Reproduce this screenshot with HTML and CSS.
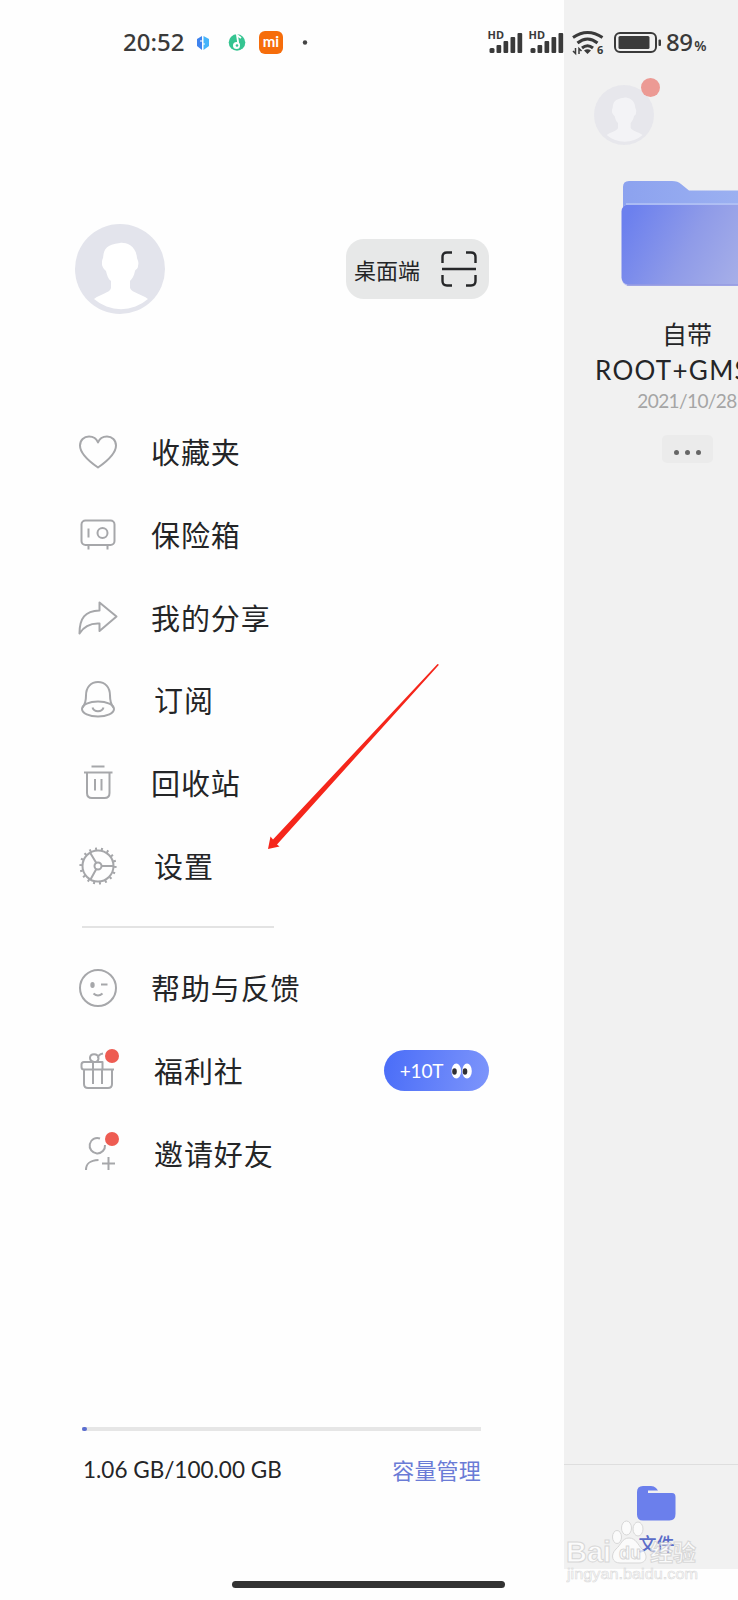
FILE: index.html
```html
<!DOCTYPE html>
<html lang="zh-CN">
<head>
  <meta charset="UTF-8" />
  <title>我的</title>
  <link rel="stylesheet" href="styles.css">
</head>
<body>

<!-- 状态栏 -->
<div class="status-bar">
  <span class="time">20:52</span>
  <svg class="status-left" width="120" height="30" viewBox="190 27 120 30">
    <path d="M202 36l-5 3v7l5 4z" fill="#3f83ee" />
    <path d="M203.500 36l5.500 3v7l-5.500 4z" fill="#45b4fa" />
    <path d="M200 41h3M205 44h-3" stroke="#fff" stroke-width="1" />
    <circle cx="237" cy="42.500" r="8.300" fill="#35c491" />
    <circle cx="236.500" cy="45.500" r="3.500" fill="#fff" />
    <path d="M238.500 45l-1.500-10 4 3" fill="none" stroke="#fff" stroke-width="1.800" />
    <circle cx="237" cy="45.500" r="1.300" fill="#35c491" />
    <rect x="259" y="31" width="24" height="23" rx="6" fill="#f66d0b" />
    <text class="mi" x="271" y="47" text-anchor="middle">mi</text>
    <circle cx="305" cy="42.500" r="2.200" fill="#444" />
  </svg>
  <svg class="status-right" width="176" height="30" viewBox="486 27 176 30">
    <g id="signal" fill="#3a3a3a">
      <text class="hd" x="487.500" y="39">HD</text>
      <rect x="489.500" y="48" width="5" height="5" rx="1.500" />
      <rect x="496.500" y="45" width="4.700" height="8" rx="1" />
      <rect x="503.500" y="41" width="4.700" height="12" rx="1" />
      <rect x="510.500" y="37" width="4.700" height="16" rx="1" />
      <rect x="517.500" y="33" width="4.700" height="20" rx="1" />
    </g>
    <use href="#signal" x="41" />
    <g fill="none" stroke="#3a3a3a" stroke-width="3">
      <path d="M573 37.500q14.500-10 29.500 0" />
      <path d="M577.500 43q10-8 20 0" />
      <path d="M582 48q5.500-4.500 11 0" />
      <path d="M575.500 48v5.500l-2.500-2.500M579 54v-5.500l2.500 2.500" stroke-width="1.500" />
    </g>
    <path d="M584 50.500q3.500-2.500 7 0l-3.500 3.500z" fill="#3a3a3a" />
    <text class="wifi-six" x="597" y="54">6</text>
    <rect x="615" y="33" width="41" height="19" rx="5" fill="none" stroke="#3a3a3a" stroke-width="2" />
    <rect x="618.500" y="36" width="31" height="13" rx="1.500" fill="#3a3a3a" />
    <rect x="658.500" y="39.500" width="2.500" height="6.500" rx="1" fill="#3a3a3a" />
  </svg>
  <span class="battery-text">89<small>%</small></span>
</div>

<!-- 侧边抽屉 -->
<div class="drawer">
  <div class="profile">
    <svg class="avatar" viewBox="0 0 90 90">
      <circle cx="45" cy="45" r="45" fill="#e3e4ec" />
      <path id="person" d="M45 19c2-1 16 0 17 15 1 3 2 4 1 8 0 3-2 3-3 5-1 5-3 8-5 10v7c2 5 12 6 18 11a41 41 0 0 1-54 0c6-5 16-6 17-11v-7c-3-2-4-6-5-10-2-2-3-3-4-6 0-4 0-5 1-7 1-8 2-13 17-15z" fill="#fff" />
    </svg>
    <div class="desktop-btn">
      <span>桌面端</span>
      <svg width="36" height="36" viewBox="0 0 36 36" fill="none" stroke="#262729" stroke-width="2.400">
        <path d="M1.500 12V6q0-4.500 4.500-4.500h5M25 1.500h5q4.500 0 4.500 4.500v6M34.500 24v6q0 4.500-4.500 4.500h-5M11 34.500H6q-4.500 0-4.500-4.500v-6M1 18h34" />
      </svg>
    </div>
  </div>

  <ul class="menu">
    <li>
      <svg class="icon" viewBox="0 0 40 40"><path d="M20 35.500C12 30 2 22 2 13.500 2 8 6 4.500 11 4.500c4 0 7.500 2 9 6 1.500-4 5-6 9-6 5 0 9 3.500 9 9C38 22 28 30 20 35.500z" /></svg>
      <span>收藏夹</span>
    </li>
    <li>
      <svg class="icon" viewBox="0 0 40 40"><rect x="3.500" y="5.500" width="33" height="24.500" rx="4" /><path d="M10.500 13.500v9M10.500 30v4.500M29.500 30v4.500" /><circle cx="24.500" cy="18" r="5" /></svg>
      <span>保险箱</span>
    </li>
    <li>
      <svg class="icon" viewBox="0 0 40 40"><path d="M1.500 35.500C1.500 20 7 13 21.500 12.500V4.500L38.500 18.500 21.500 33V25.500C12 25 6 28 1.500 35.500z" /></svg>
      <span>我的分享</span>
    </li>
    <li class="narrow">
      <svg class="icon" viewBox="0 0 40 40"><path d="M4.500 27.500C7.500 24 8 20 8 15.500 8 7 13 2 20 2s12 5 12 13.500c0 4.500.5 8.500 3.500 12" /><ellipse cx="20" cy="29" rx="16" ry="7.500" /><path d="M14.500 27.500c1.500 5 9.500 5 11 0" /></svg>
      <span>订阅</span>
    </li>
    <li>
      <svg class="icon" viewBox="0 0 40 40"><path d="M13.500 3.500h13M6 9.500h28.500M9 9.500V30q0 5 5 5h12.500q5 0 5-5V9.500M17 16v11.500M23.500 16v11.500" /></svg>
      <span>回收站</span>
    </li>
    <li class="narrow">
      <svg class="icon" viewBox="0 0 40 40"><circle cx="20" cy="20" r="15.500" /><circle cx="20" cy="20" r="17.300" stroke-width="2.600" pathLength="54" stroke-dasharray="1 2" /><circle cx="20" cy="20" r="3.500" /><path d="M23.500 20h12M18.300 17L12 6.500M18.300 23L12.500 33.500" /></svg>
      <span>设置</span>
    </li>
  </ul>

  <div class="divider"></div>

  <ul class="menu">
    <li>
      <svg class="icon" viewBox="0 0 40 40"><circle cx="20" cy="20" r="18" /><ellipse cx="14.500" cy="17" rx="1.200" ry="2" fill="#a6a7aa" /><path d="M23 16.500h6.500M15.500 25.500q4.500 4 9 0" /></svg>
      <span>帮助与反馈</span>
    </li>
    <li class="narrow">
      <svg class="icon" viewBox="0 0 40 40"><path d="M36 18.500H6q-2.500 0-2.500-2.500v-2.500Q3.500 11 6 11h18.500v7.500M6 18.500V33q0 4 4 4h20q4 0 4-4V18.500M15 11v22M24 18v15M16 11q-4-1-4-4c0-5 8-5 8.500 0 0 2-1 3.500-2.500 4M20 7q0-3.500 5-4.500" /></svg>
      <span>福利社</span>
      <i class="dot"></i>
      <div class="pill">+10T
        <svg width="22" height="16" viewBox="0 0 22 16"><ellipse cx="5.300" cy="8" rx="4.800" ry="7.500" fill="#fff" /><ellipse cx="16" cy="8" rx="4.800" ry="7.500" fill="#fff" /><ellipse cx="3.500" cy="8.500" rx="2.300" ry="3.300" fill="#302f34" /><ellipse cx="14" cy="8.500" rx="2.300" ry="3.300" fill="#302f34" /></svg>
      </div>
    </li>
    <li class="narrow">
      <svg class="icon" viewBox="0 0 40 40"><path d="M22 4.500A7.700 7.700 0 1 0 27 11M8 36c0-7 4-9.500 12.500-10M24 29.500h13M30.500 23v13" /></svg>
      <span>邀请好友</span>
      <i class="dot"></i>
    </li>
  </ul>

  <div class="storage">
    <div class="bar"><div class="bar-fill" style="width: 1.06%"></div></div>
    <div class="storage-info">
      <span class="used">1.06 GB/100.00 GB</span>
      <a class="manage">容量管理</a>
    </div>
  </div>
</div>

<!-- 右侧被遮住的文件页 -->
<div class="files">
  <div class="files-head">
    <svg class="small-avatar" viewBox="0 0 90 90"><circle cx="45" cy="45" r="45" fill="#e7e7ec" /><use href="#person" opacity=".5" /></svg>
    <i class="dot"></i>
  </div>
  <div class="file">
    <svg class="folder" width="132" height="110" viewBox="0 0 132 110">
      <defs>
        <linearGradient id="front" x1="0" y1=".3" x2="1" y2=".6">
          <stop offset="0" stop-color="#6c80ee" />
          <stop offset=".5" stop-color="#8f9be8" />
          <stop offset="1" stop-color="#a9b1e8" />
        </linearGradient>
        <linearGradient id="back"><stop offset="0" stop-color="#8ca2ef" /><stop offset="1" stop-color="#9db2f1" /></linearGradient>
      </defs>
      <path d="M2 7q0-6 6-6h43q6 0 9 3l8 6.500h64V40H2z" fill="url(#back)" />
      <rect x="1" y="24" width="140" height="82" rx="7" fill="#b9bff0" />
      <rect x=".5" y="24.500" width="140" height="80" rx="7" fill="url(#front)" />
      <path d="M5 24h127" stroke="#b4c4f6" stroke-width="1.500" />
      <path d="M6 105h126" stroke="#8489da" stroke-width="1" />
    </svg>
    <div class="file-name">自带</div>
    <div class="file-name latin">ROOT+GMS</div>
    <div class="file-date">2021/10/28</div>
    <div class="more"><b></b><b></b><b></b></div>
  </div>
  <div class="tab-bar">
    <svg width="39" height="35" viewBox="0 0 39 35"><path d="M0 6q0-6 6-6h8q3 0 5 2l2 2.500h-10V7H35q3.500 0 3.500 4v17q0 6.500-6 6.500H6q-6 0-6-6z" fill="#6b7fec" /></svg>
    <span>文件</span>
  </div>
</div>

<!-- 指向“设置”的箭头 -->
<svg class="arrow" width="172" height="188" viewBox="0 0 172 188">
  <path d="M169.500 0L171 0.800 9 180.500l2.500 2L0 185l2.500-12.500 2.500 3z" fill="#f5261b" />
</svg>

<!-- 水印 -->
<div class="watermark">
  <svg width="136" height="68" viewBox="0 0 136 68">
    <g fill="#fff" stroke="#cfcfcf" stroke-width="1">
      <text class="wm-big" x="0" y="42">Bai</text>
      <ellipse cx="51" cy="17" rx="4.500" ry="6.500" />
      <ellipse cx="60.500" cy="8" rx="5" ry="7" />
      <ellipse cx="72" cy="9" rx="5" ry="7" />
      <path d="M63 18c7 0 9 7 13 11 7 7 4 14-3 14H54c-8 0-10-8-4-14 5-4 6-11 13-11z" />
      <text class="wm-du" x="53" y="39">du</text>
      <text class="wm-cn" x="84" y="41">经验</text>
      <text class="wm-url" x="1" y="59" textLength="131" lengthAdjust="spacingAndGlyphs">jingyan.baidu.com</text>
    </g>
  </svg>
</div>

<div class="home-bar"></div>

</body>
</html>
```

FILE: styles.css
```css
* {
  box-sizing: border-box;
}

body {
  margin: 0;
  width: 738px;
  height: 1600px;
  display: flex;
  position: relative;
  overflow: hidden;
  background: #fefefe;
  color: #242527;
  font-family: Lato, "Noto Sans CJK SC", sans-serif;
}

/* 状态栏,浮在两侧页面之上 */
.status-bar {
  position: absolute;
  top: 27px;
  left: 123px;
  width: 600px;
  height: 30px;
  display: flex;
  align-items: center;
  color: #3a3a3a;
  z-index: 2;
}

.time {
  width: 67px;
  font: 500 24px/30px "Noto Sans", sans-serif;
}

.status-right {
  margin-left: 176px;
}

.mi {
  font: bold 15px Lato, sans-serif;
  fill: #fff;
}

.hd {
  font: bold 11px "Noto Sans", sans-serif;
}

.wifi-six {
  font: bold 11px "Noto Sans", sans-serif;
  fill: #3a3a3a;
}

.battery-text {
  margin-left: 4px;
  font: 500 24px/30px "Noto Sans", sans-serif;
  letter-spacing: -0.6px;
  white-space: nowrap;
}

.battery-text small {
  margin-left: 2px;
  font-size: 14px;
  line-height: 1;
  font-weight: 600;
}

/* 抽屉 */
.drawer {
  width: 564px;
  padding: 224px 75px 0;
}

.profile {
  display: flex;
  justify-content: space-between;
  align-items: center;
  height: 90px;
}

.avatar {
  width: 90px;
  height: 90px;
}

.desktop-btn {
  width: 143px;
  height: 60px;
  padding: 0 12px 0 8px;
  display: flex;
  justify-content: space-between;
  align-items: center;
  border-radius: 18px;
  background: #e7e8e8;
  font-size: 22px;
}

.desktop-btn span {
  margin-top: -1px;
}

/* 菜单 */
.menu {
  margin: 0;
  padding: 0;
  list-style: none;
}

.profile + .menu {
  margin-top: 97px;
}

.menu li {
  position: relative;
  height: 82.700px;
  display: flex;
  align-items: center;
  padding-left: 2.500px;
  font-size: 29px;
  letter-spacing: 0.9px;
}

.menu li span {
  margin: -2px 0 0 33.500px;
}

.menu li.narrow span {
  margin-left: 36.500px;
}

.icon {
  width: 40px;
  height: 40px;
  fill: none;
  stroke: #a6a7aa;
  stroke-width: 2;
  stroke-linejoin: round;
}

.dot {
  position: absolute;
  border-radius: 50%;
  background: #ee5c52;
}

.menu .dot {
  left: 30px;
  top: 19px;
  width: 14px;
  height: 14px;
}

.pill {
  width: 105px;
  height: 41px;
  margin: -1px 0 0 auto;
  display: flex;
  align-items: center;
  justify-content: center;
  gap: 8px;
  border-radius: 21px;
  background: linear-gradient(100deg, #4a6df8, #7d95fb);
  color: #fff;
  font-size: 19px;
  letter-spacing: -0.2px;
}

.divider {
  width: 192px;
  height: 2px;
  margin: 19px 0 19px 7px;
  background: #e3e3e3;
}

/* 容量 */
.storage {
  width: 399px;
  margin: 232px 0 0 7px;
}

.bar {
  height: 4px;
  background: #e6e6e6;
}

.bar-fill {
  min-width: 5px;
  height: 4px;
  border-radius: 2px;
  background: #5a6dd0;
}

.storage-info {
  display: flex;
  justify-content: space-between;
  align-items: center;
  height: 40px;
  margin-top: 18px;
  font-size: 22.500px;
}

.used {
  margin-left: 1px;
}

.manage {
  margin-top: -1px;
  font-size: 22px;
  letter-spacing: 0.200px;
  color: #6a7bd6;
}

/* 文件页 */
.files {
  width: 174px;
  height: 1569px;
  display: flex;
  flex-direction: column;
  overflow: hidden;
  background: #f1f1f1;
}

.files-head {
  position: relative;
  height: 180px;
  padding: 85px 0 0 30px;
}

.small-avatar {
  width: 60px;
  height: 60px;
}

.files-head .dot {
  left: 77px;
  top: 78px;
  width: 19px;
  height: 19px;
  background: #ec9a94;
}

.file {
  width: 246px;
  display: flex;
  flex-direction: column;
  align-items: center;
}

.folder {
  margin-bottom: 27px;
}

.file-name {
  font-size: 25px;
  line-height: 35px;
}

.latin {
  align-self: flex-start;
  margin: 1px 0 0 31px;
  font-size: 26px;
  letter-spacing: 1.300px;
}

.file-date {
  font-size: 19px;
  line-height: 26px;
  letter-spacing: -0.600px;
  color: #a5a5a5;
}

.more {
  width: 51px;
  height: 28px;
  margin-top: 21px;
  padding-top: 6px;
  display: flex;
  align-items: center;
  justify-content: center;
  gap: 6px;
  border-radius: 5px;
  background: #ebebeb;
}

.more b {
  width: 5px;
  height: 5px;
  border-radius: 50%;
  background: #666;
}

.tab-bar {
  height: 105px;
  margin-top: auto;
  padding: 21px 0 0 11px;
  display: flex;
  flex-direction: column;
  align-items: center;
  border-top: 1px solid #dedede;
  font-size: 18px;
  font-weight: 500;
  color: #5a6cc8;
}

.tab-bar span {
  margin-top: 9px;
}

/* 浮层 */
.arrow {
  position: absolute;
  left: 268px;
  top: 664px;
}

.watermark {
  position: absolute;
  left: 566px;
  top: 1520px;
  opacity: 0.75;
}

.wm-big {
  font: bold 29px "Liberation Sans", sans-serif;
}

.wm-du {
  font: bold 18px "Liberation Sans", sans-serif;
}

.wm-cn {
  font: bold 23px "Noto Sans CJK SC", sans-serif;
}

.wm-url {
  font: 15px "Liberation Sans", sans-serif;
  stroke-width: 0.6;
}

.home-bar {
  position: absolute;
  left: 232px;
  top: 1581px;
  width: 273px;
  height: 7px;
  border-radius: 4px;
  background: #333;
}
```
